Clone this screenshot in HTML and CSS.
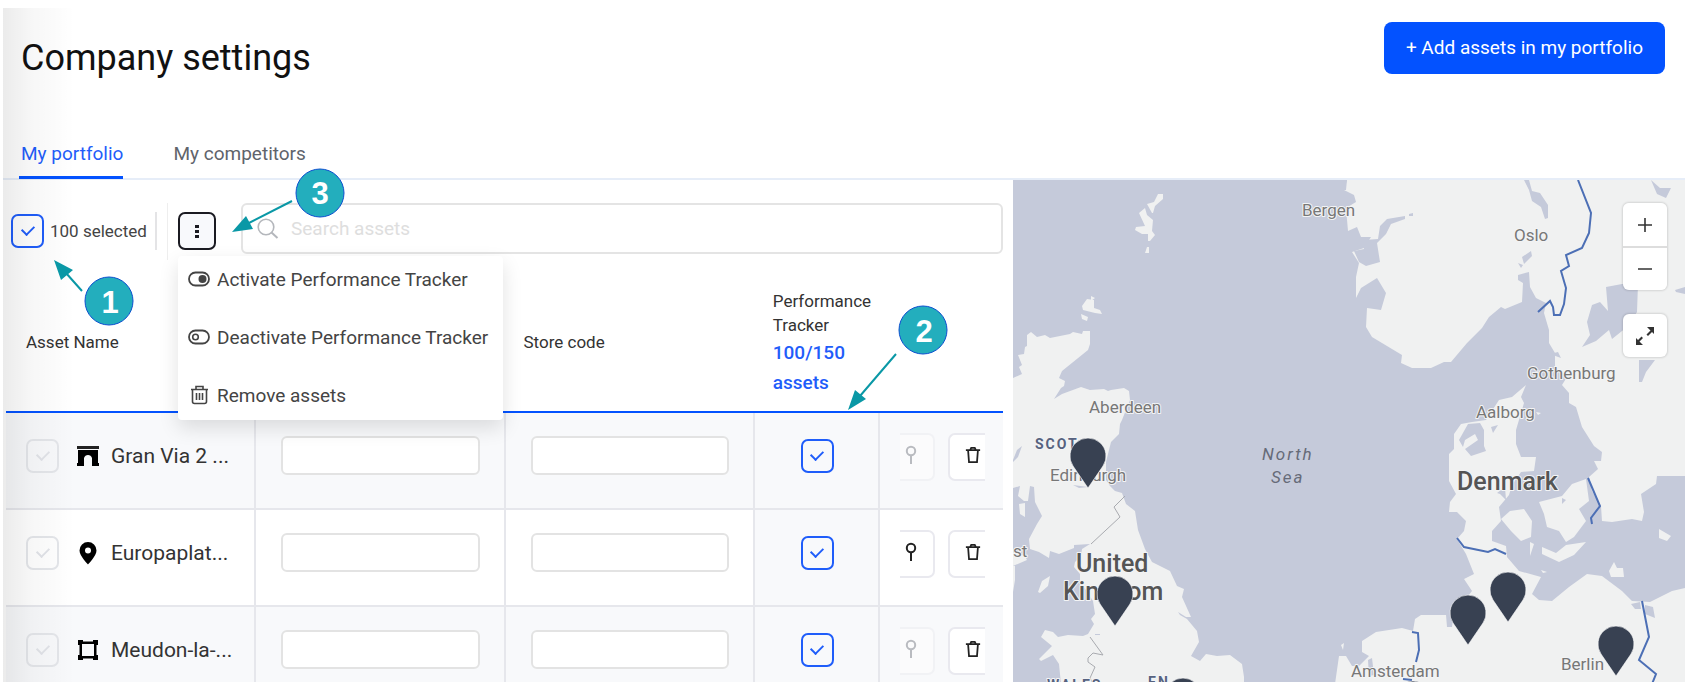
FILE: index.html
```html
<!DOCTYPE html>
<html lang="en">
<head>
<meta charset="utf-8">
<meta name="viewport" content="width=device-width, initial-scale=1">
<title>Company settings</title>
<link rel="stylesheet" href="styles.css">
</head>
<body>
<svg class="sprite" aria-hidden="true">
  <symbol id="trash" viewBox="0 0 18 20"><path d="M1 4.500h16M6 4l1-2h4l1 2M3.500 5l1 13h9l1-13" fill="none" stroke="currentColor" stroke-width="2"/></symbol>
  <symbol id="needle" viewBox="0 0 12 20"><circle cx="6" cy="6" r="4.200" fill="none" stroke="currentColor" stroke-width="2"/><path d="M6 10v9" stroke="currentColor" stroke-width="2"/></symbol>
</svg>
<div class="page">
  <header class="header">
    <h1 class="title">Company settings</h1>
    <button class="add" type="button">+ Add assets in my portfolio</button>
  </header>
  <nav class="tabs">
    <a class="tab tab-active" href="#portfolio">My portfolio</a>
    <a class="tab" href="#competitors">My competitors</a>
  </nav>
  <main class="main">
    <section class="assets">
      <div class="toolbar">
        <label class="select-all"><input class="check" type="checkbox" checked>100 selected</label>
        <div class="menu-wrap">
          <button class="more" type="button" aria-label="Bulk actions">
            <svg width="6" height="18" viewBox="0 0 6 18"><path d="M1 3h4v3H1zM1 8h4v3H1zM1 13h4v3H1z" fill="#1b1b22"/></svg>
          </button>
          <div class="menu">
            <button class="item" type="button">
              <svg width="22" height="16" viewBox="0 0 22 16"><rect x="1" y="1.500" width="20" height="13" rx="6.500" fill="none" stroke="#444" stroke-width="1.800"/><circle cx="14.500" cy="8" r="4" fill="#444"/></svg>
              Activate Performance Tracker
            </button>
            <button class="item" type="button">
              <svg width="22" height="16" viewBox="0 0 22 16"><rect x="1" y="1.500" width="20" height="13" rx="6.500" fill="none" stroke="#444" stroke-width="1.800"/><circle cx="7.500" cy="8" r="2.800" fill="none" stroke="#444" stroke-width="1.600"/></svg>
              Deactivate Performance Tracker
            </button>
            <button class="item" type="button">
              <svg width="22" height="20" viewBox="0 0 22 20"><path d="M3 4.500h17M8 4V1.500h7V4M4.500 5v11.500q0 2 2 2h10q2 0 2-2V5M8.500 8v7M11.500 8v7M14.500 8v7" fill="none" stroke="#444" stroke-width="1.600"/></svg>
              Remove assets
            </button>
          </div>
        </div>
        <label class="search">
          <svg width="22" height="22" viewBox="0 0 22 22"><circle cx="9" cy="9" r="7.800" fill="none" stroke="#b4b7bc" stroke-width="1.600"/><path d="M14.500 14.500l6 5.500" stroke="#b4b7bc" stroke-width="2"/></svg>
          <input class="search-input" type="text" placeholder="Search assets" aria-label="Search assets">
        </label>
      </div>
      <table class="table">
        <thead>
          <tr>
            <th class="col-name">Asset Name</th>
            <th class="col-text"></th>
            <th class="col-text">Store code</th>
            <th class="col-track">Performance Tracker<span class="quota">100/150 assets</span></th>
            <th class="col-actions"></th>
          </tr>
        </thead>
        <tbody>
          <tr>
            <td><div class="asset"><input class="check check-off" type="checkbox" aria-label="Select Gran Via 2" disabled>
              <svg width="22" height="22" viewBox="0 0 22 22"><path d="M0 1h22v3H0z" fill="#222"/><path d="M1 5h20v13h1v3h-7v-8q-1-3-4-3t-4 3v8H0v-3h1z"/></svg>
              Gran Via 2 ...</div></td>
            <td><input class="field" type="text" aria-label="Label of Gran Via 2"></td>
            <td><input class="field" type="text" aria-label="Store code of Gran Via 2"></td>
            <td class="track"><input class="check" type="checkbox" aria-label="Track Gran Via 2" checked></td>
            <td><div class="actions"><button class="action action-pin" type="button" aria-label="Locate" disabled><svg width="12" height="20"><use href="#needle"/></svg></button><button class="action action-del" type="button" aria-label="Delete"><svg width="16" height="18"><use href="#trash"/></svg></button></div></td>
          </tr>
          <tr>
            <td><div class="asset"><input class="check check-off" type="checkbox" aria-label="Select Europaplatz" disabled>
              <svg width="22" height="24" viewBox="0 0 22 24"><path fill-rule="evenodd" d="M11 1a8.500 8.500 0 0 0-8.500 8.500C2.500 15 11 23.500 11 23.500S19.500 15 19.500 9.500A8.500 8.500 0 0 0 11 1zm0 5.500a3 3 0 1 1 0 6 3 3 0 0 1 0-6z"/></svg>
              Europaplat...</div></td>
            <td><input class="field" type="text" aria-label="Label of Europaplatz"></td>
            <td><input class="field" type="text" aria-label="Store code of Europaplatz"></td>
            <td class="track"><input class="check" type="checkbox" aria-label="Track Europaplatz" checked></td>
            <td><div class="actions"><button class="action action-pin" type="button" aria-label="Locate"><svg width="12" height="20"><use href="#needle"/></svg></button><button class="action action-del" type="button" aria-label="Delete"><svg width="16" height="18"><use href="#trash"/></svg></button></div></td>
          </tr>
          <tr>
            <td><div class="asset"><input class="check check-off" type="checkbox" aria-label="Select Meudon" disabled>
              <svg width="22" height="22" viewBox="0 0 22 22"><path d="M1 1h5v1.500h10V1h5v5h-1.500v10H21v5h-5v-1.500H6V21H1v-5h1.500V6H1zM5 5v12h12V5z" fill-rule="evenodd"/></svg>
              Meudon-la-...</div></td>
            <td><input class="field" type="text" aria-label="Label of Meudon"></td>
            <td><input class="field" type="text" aria-label="Store code of Meudon"></td>
            <td class="track"><input class="check" type="checkbox" aria-label="Track Meudon" checked></td>
            <td><div class="actions"><button class="action action-pin" type="button" aria-label="Locate" disabled><svg width="12" height="20"><use href="#needle"/></svg></button><button class="action action-del" type="button" aria-label="Delete"><svg width="16" height="18"><use href="#trash"/></svg></button></div></td>
          </tr>
        </tbody>
      </table>
    </section>
    <section class="map">
      <svg class="map-canvas" viewBox="1013 180 672 502" preserveAspectRatio="xMidYMin slice">
        <defs>
          <path id="pin" d="M0 0L-15 -22A18 18 0 1 1 15 -22Z" fill="#384152" stroke="#fff" stroke-opacity=".6" stroke-width="1"/>
        </defs>
        <g class="land">
          <path d="M1013 378L1022 374 1019 367 1022 365 1018 355 1024 354 1025 347 1027 346V335L1031 332 1037 337 1045 335 1050 338 1070 334 1073 332 1082 334 1083 331H1090V344L1088 350 1062 371 1059 378 1065 381 1064 386 1061 388 1054 399 1062 394 1081 387 1090 390 1104 389 1108 391 1111 390 1124 388 1129 391 1130 400 1122 420 1120 424 1119 434 1111 442 1106 462V480L1110 486 1115 491 1122 493 1126 504 1135 511 1138 530 1145 549 1152 562 1170 571 1177 586 1184 589 1182 597 1191 617 1186 617 1178 612 1180 615 1187 619 1197 631 1199 642 1191 656 1200 661 1206 654 1217 656 1230 655 1242 664 1244 677V684H1061L1059 664 1053 655 1041 661 1039 659 1052 646 1041 637 1045 630 1053 632 1058 637 1068 635 1083 636 1088 634 1094 624 1091 619 1095 614 1093 601 1080 581V574L1074 567 1075 562 1081 556 1082 549 1090 544 1074 545V548L1059 554 1050 551 1049 558 1039 552 1030 549 1029 539 1037 524 1042 516 1035 502 1034 487 1030 486 1028 501 1024 501 1018 496 1020 486 1013 488Z"/>
          <path d="M1147 204L1154 202 1158 194H1163V199L1155 206 1153 213H1152zM1139 213L1145 208 1147 215 1153 220 1152 231 1155 235 1150 241H1148V234L1142 234 1135 230 1136 227 1145 226zM1147 247H1149V253H1145zM1087 299L1094 300V308L1100 310 1102 314 1095 313 1083 310 1082 306zM1081 314L1088 317 1087 321 1082 319zM1091 296L1095 298 1091 301zM1019 504L1025 503V517L1020 514zM1038 592L1042 581 1050 576 1048 586 1040 593zM1013 552L1025 556 1027 560 1013 566zM1013 566H1015V580L1013 592z"/>
          <path d="M1347 180L1344 190 1354 195 1356 202 1346 208 1348 231 1357 227 1361 237H1371L1364 248 1352 252 1359 263 1356 277V298L1361 288 1377 278 1386 293 1381 310 1367 308 1366 327 1372 337 1402 355 1401 363 1412 368H1431L1444 362H1451L1467 343 1482 328 1489 317 1501 307 1505 309 1522 302 1523 283 1518 280V275L1529 272 1530 287 1536 298 1546 303 1544 313 1549 330V343L1555 353V367L1567 377 1562 385 1569 393V403L1576 407 1582 427 1594 446 1602 452 1601 461H1594L1598 469 1589 477 1592 491 1601 506 1602 521 1612 522 1632 519 1642 521 1644 512 1641 494 1656 484 1657 476H1685V180Z"/>
          <path d="M1526 385L1521 397 1524 403 1516 430V444L1521 457H1536L1534 471 1521 472 1512 485 1509 495 1499 507 1501 521 1492 531V541L1506 546 1507 557 1519 571 1541 577 1532 594 1539 600 1552 601 1569 587 1587 574 1602 576 1622 591 1632 601 1650 602 1672 591 1685 588V684H1335L1339 656H1346L1352 666H1359L1369 656 1362 652V641L1376 632 1402 628 1413 631 1415 619 1421 615H1446L1447 627H1452L1454 614 1472 591 1464 579 1474 574 1466 554 1457 539 1464 531 1466 521 1457 512H1449L1450 502 1456 494 1449 481V454L1454 449V434L1461 424 1472 422 1486 420 1499 400 1512 397Z"/>
          <path d="M1501 519L1510 511 1524 509 1532 521 1531 537 1521 541 1511 531zM1539 502L1562 496 1572 484 1586 479 1589 501 1579 509 1586 521 1574 537 1566 542 1559 531 1547 527 1544 514zM1542 547L1556 553 1566 545 1586 542 1574 555 1559 562 1542 554zM1659 529L1671 536 1667 541 1659 538zM1609 571L1614 562 1617 568 1623 568 1624 577 1611 577zM1530 542L1534 544 1530 556zM1541 570L1547 572 1543 573zM1341 645L1344 643 1343 650zM1536 412L1541 413 1538 415z"/>
        </g>
        <g class="water">
          <path d="M1339 180H1347L1346 190 1339 190zM1364 240L1378 239 1380 226 1387 219 1405 216V219L1391 224 1386 234 1377 243 1380 262 1366 266 1359 262 1354 251 1364 249zM1409 214L1413 213V216H1409zM1524 180H1529L1532 191 1540 193 1548 205V218L1545 219 1541 207 1532 201 1529 190zM1522 257L1531 251 1532 256 1524 264zM1518 263L1523 265 1521 268zM1606 287L1622 284H1638L1637 312 1627 327 1612 339 1609 330 1596 341 1582 347 1590 335 1587 322 1592 305 1600 302 1608 311zM1651 180L1660 188H1671L1666 198 1657 194zM1639 360H1655L1646 372 1642 382H1639zM1675 290L1685 287V294L1676 292zM1459 440L1468 424 1480 423 1484 430V446L1486 451 1471 456 1465 449 1478 440 1475 434 1465 440 1463 447zM1013 460L1017 450 1022 446 1018 457 1013 462zM1631 604L1640 602 1641 609H1635zM1645 605L1653 607 1655 618 1645 614zM1550 354L1558 352 1561 358zM1562 498L1566 500 1562 504zM1520 474L1528 473 1522 480zM1073 485L1088 487 1079 488zM1095 634H1100V635H1095zM1368 660L1372 658 1374 675 1369 676zM1497 493L1500 494 1506 500 1505 487zM1491 427L1498 425 1493 433z"/>
        </g>
        <g class="border">
          <path d="M1578 180L1591 213 1589 233 1582 248 1566 255 1569 266 1561 271 1566 288 1564 304 1560 315H1554L1553 307 1550 301 1538 312M1588 478L1600 506 1591 518 1592 524M1457 538L1464 547 1488 552 1495 549 1506 554M1642 601L1649 637 1639 660 1656 674 1652 684M1412 632L1418 633 1419 650 1416 662M1403 679L1412 680"/>
        </g>
        <path class="region" d="M1125 496L1114 507 1120 517 1091 544M1090 637L1103 655 1093 653 1088 658V662L1095 667 1090 678 1093 684"/>
        <g class="labels">
          <text x="1302" y="216">Bergen</text>
          <text x="1514" y="241">Oslo</text>
          <text x="1527" y="379">Gothenburg</text>
          <text x="1476" y="418">Aalborg</text>
          <text x="1089" y="413">Aberdeen</text>
          <text x="1050" y="481">Edinburgh</text>
          <text x="1013" y="557">st</text>
          <text x="1351" y="677">Amsterdam</text>
          <text x="1561" y="670">Berlin</text>
          <text class="nation" x="1035" y="449">SCOT</text>
          <text class="nation" x="1047" y="690">WALES</text>
          <text class="nation" x="1148" y="687">EN</text>
          <text class="sea" x="1262" y="460">North</text>
          <text class="sea" x="1271" y="483">Sea</text>
          <text class="country" x="1457" y="490">Denmark</text>
          <text class="country" x="1076" y="572">United</text>
          <text class="country" x="1063" y="600">Kingdom</text>
        </g>
        <use href="#pin" x="1088" y="488"/>
        <use href="#pin" x="1115" y="626"/>
        <use href="#pin" x="1508" y="622"/>
        <use href="#pin" x="1468" y="645"/>
        <use href="#pin" x="1616" y="676"/>
        <use href="#pin" x="1183" y="728"/>
        <use href="#pin" x="1413" y="731"/>
      </svg>
      <div class="controls">
        <div class="zoom">
          <button class="control" type="button" aria-label="Zoom in"><svg width="16" height="16" viewBox="0 0 16 16"><path d="M8 1v14M1 8h14" stroke="#333" stroke-width="1.600"/></svg></button>
          <button class="control" type="button" aria-label="Zoom out"><svg width="16" height="16" viewBox="0 0 16 16"><path d="M1 8h14" stroke="#333" stroke-width="1.600"/></svg></button>
        </div>
        <button class="control control-full" type="button" aria-label="Full screen"><svg width="20" height="20" viewBox="0 0 20 20"><path d="M12 1h7v7l-2-2-4 4-1.500-1.500 4-4zM8 19H1v-7l2 2 3.500-3.500L8 12l-3.500 3.500z" fill="#333"/></svg></button>
      </div>
    </section>
  </main>
  <svg class="callouts" width="960" height="440" viewBox="0 0 960 440">
    <g class="arrows">
      <path d="M292 201L245 225M82 291L66 273M896 354L860 396"/>
      <path class="heads" d="M232 232L246 216 253 229zM54 260L73 270 61 280zM848 410L855 390 866 399z"/>
    </g>
    <g class="badges">
      <circle cx="320" cy="193" r="24"/><text x="320" y="204">3</text>
      <circle cx="109" cy="301" r="24"/><text x="110" y="313">1</text>
      <circle cx="923" cy="330" r="24"/><text x="924" y="342">2</text>
    </g>
  </svg>
</div>
</body>
</html>
```

FILE: styles.css
```css
* { box-sizing: border-box; }
body { margin: 0; background: #fff; font-family: Roboto, "Liberation Sans", sans-serif; color: #333; }
button, input { font-family: inherit; margin: 0; }
.sprite { position: absolute; width: 0; height: 0; }
.page { position: relative; display: flex; flex-direction: column; height: 100vh; padding: 8px 4px 2px 3px; overflow: hidden; }
.page::before {
  content: ""; position: absolute; z-index: 1; top: 8px; bottom: 2px; left: 3px; width: 72px; pointer-events: none;
  background: linear-gradient(to right, rgba(0, 0, 0, .08), rgba(0, 0, 0, .03) 40%, rgba(0, 0, 0, 0));
}
.header { display: flex; justify-content: space-between; align-items: flex-start; padding: 14px 20px 0 18px; height: 127px; }
.title { margin: 14px 0 0; font-size: 36px; line-height: 44px; font-weight: 400; color: #111; }
.add { height: 52px; padding: 0 22px; border: 0; border-radius: 8px; background: #0352ff; color: #fff; font-size: 19px; line-height: 24px; }
.tabs { display: flex; gap: 48px; padding-left: 16px; border-bottom: 2px solid #e6edf8; }
.tab { padding: 7px 0 10px 2px; margin-bottom: -1px; border-bottom: 3px solid transparent; font-size: 19px; line-height: 24px; font-weight: 400; color: #5f646c; text-decoration: none; }
.tab-active { border-color: #0352ff; color: #1f5dfa; }
.main { flex: 1; min-height: 0; display: grid; grid-template-columns: minmax(0, 1010fr) minmax(0, 672fr); grid-template-rows: minmax(0, 1fr); overflow: hidden; }
.assets { min-width: 0; padding: 23px 10px 0 3px; }
.toolbar { display: flex; align-items: flex-start; padding-left: 5px; }
.select-all { display: flex; align-items: center; gap: 6px; width: 146px; height: 38px; margin-top: 9px; border-right: 2px solid #e4e4e6; font-size: 17px; color: #444; white-space: nowrap; }
.check { appearance: none; flex: none; display: grid; place-items: center; width: 33px; height: 34px; border: 2px solid #1f5dfa; border-radius: 7px; background: transparent; color: #1f5dfa; }
.check::before { content: ""; width: 6px; height: 10px; margin-top: -4px; border: solid currentColor; border-width: 0 2px 2px 0; transform: rotate(45deg); }
.check-off { border-color: #e4e6ea; color: #e1e3e8; }
.menu-wrap { position: relative; margin-left: 10px; padding: 9px 0 0 10px; height: 57px; border-left: 1px solid #eee; }
.more { display: grid; place-items: center; width: 38px; height: 38px; padding: 0; border: 2px solid #1b1b22; border-radius: 7px; background: #f8f9fc; }
.menu { position: absolute; z-index: 2; top: 53px; left: 10px; display: flex; flex-direction: column; gap: 34px; width: 325px; padding: 11px 10px 13px; border-radius: 4px; background: #fff; box-shadow: 0 8px 20px rgba(0, 0, 0, .12); }
.item { display: flex; align-items: center; gap: 7px; height: 24px; padding: 0; border: 0; background: none; font-size: 19px; font-weight: 400; color: #444; white-space: nowrap; }
.item svg { flex: none; }
.search { flex: 1; display: flex; align-items: center; gap: 12px; height: 51px; margin-left: 25px; padding: 0 14px; border: 2px solid #e4e4e4; border-radius: 6px; }
.search-input { flex: 1; min-width: 0; padding: 0; border: 0; outline: 0; background: none; font-size: 19px; }
.search-input::placeholder { color: #dedede; opacity: 1; }
.table { width: 100%; border-collapse: collapse; table-layout: fixed; }
.col-name, .col-text { width: 25%; }
.col-track { width: 125px; }
.col-actions { width: 124px; }
.table th { height: 152px; padding: 13px 20px 0; border-bottom: 2px solid #0352ff; font-size: 17px; line-height: 24px; font-weight: 400; text-align: left; color: #333; }
.table th:last-child { padding: 0; }
.table th.col-track { padding: 15px 0 0 19px; }
.table th.col-text { padding-left: 19px; }
.quota { display: block; width: 80px; margin-top: 1px; font-size: 19px; line-height: 30px; font-weight: 500; color: #1f5dfa; }
.table td { height: 97px; padding: 0 24px 10px 25px; border: 2px solid #e6e7ec; }
.table td:first-child { padding-left: 20px; padding-right: 0; border-left: 0; }
.table td:last-child { border-right: 0; padding: 0 18px 8px 20px; }
.table tbody tr:nth-child(odd) td, .table td.track { background: #f8f9fb; }
.table td.track { padding-left: 46px; padding-right: 0; }
.asset { display: flex; align-items: center; gap: 18px; font-size: 21px; line-height: 28px; color: #333; white-space: nowrap; }
.asset svg { flex: none; margin-right: -6px; fill: #000; }
.field { display: block; width: 100%; height: 39px; border: 2px solid #e3e3e3; border-radius: 6px; background: #fff; }
.actions { display: flex; justify-content: space-between; overflow: hidden; }
.action { height: 48px; padding: 0; border: 2px solid #e9e9ef; border-radius: 7px; background: #fff; color: #222; display: flex; align-items: center; }
.action svg { margin-bottom: 4px; }
.action-pin { width: 35px; padding-left: 5px; border-left: 0; border-radius: 0 7px 7px 0; }
.action-pin:disabled { border-color: #f1f2f5; background: #fbfbfc; color: #b9bbc0; }
.action-del { width: 37px; padding-left: 15px; border-right: 0; border-radius: 7px 0 0 7px; }
.map { position: relative; min-width: 0; overflow: hidden; background: #c5cada; }
.map-canvas { display: block; width: 100%; height: 100%; }
.land { fill: #f0f1f1; }
.water { fill: #c5cada; }
.border { fill: none; stroke: #4c6fb5; stroke-width: 2; }
.region { fill: none; stroke: #a9abb0; stroke-width: 1; }
.labels { font-size: 17px; fill: #777; stroke: #f3f4f5; stroke-width: 2; paint-order: stroke; stroke-linejoin: round; }
.nation { font-size: 14px; font-weight: 700; letter-spacing: 2px; fill: #56627f; }
.sea { font-size: 17px; font-style: italic; letter-spacing: 2px; fill: #666b78; stroke: none; }
.country { font-size: 25px; font-weight: 500; fill: #555; }
.controls { position: absolute; top: 23px; right: 18px; display: flex; flex-direction: column; gap: 24px; }
.zoom { display: flex; flex-direction: column; border-radius: 6px; overflow: hidden; box-shadow: 0 0 2px 1px rgba(0, 0, 0, .12); }
.control { display: grid; place-items: center; width: 44px; height: 43px; padding: 0; border: 0; background: #fff; }
.control + .control { border-top: 2px solid #ddd; height: 44px; }
.control-full { border-radius: 6px; box-shadow: 0 0 2px 1px rgba(0, 0, 0, .12); }
.callouts { position: absolute; z-index: 3; top: 0; left: 0; pointer-events: none; }
.arrows { fill: none; stroke: #0a98a6; stroke-width: 2; }
.heads { fill: #0a98a6; stroke: none; }
.badges circle { fill: #23aebd; stroke: #0d4fd0; stroke-width: 1; }
.badges text { font: bold 31px "Liberation Sans", sans-serif; fill: #fff; text-anchor: middle; }
```
